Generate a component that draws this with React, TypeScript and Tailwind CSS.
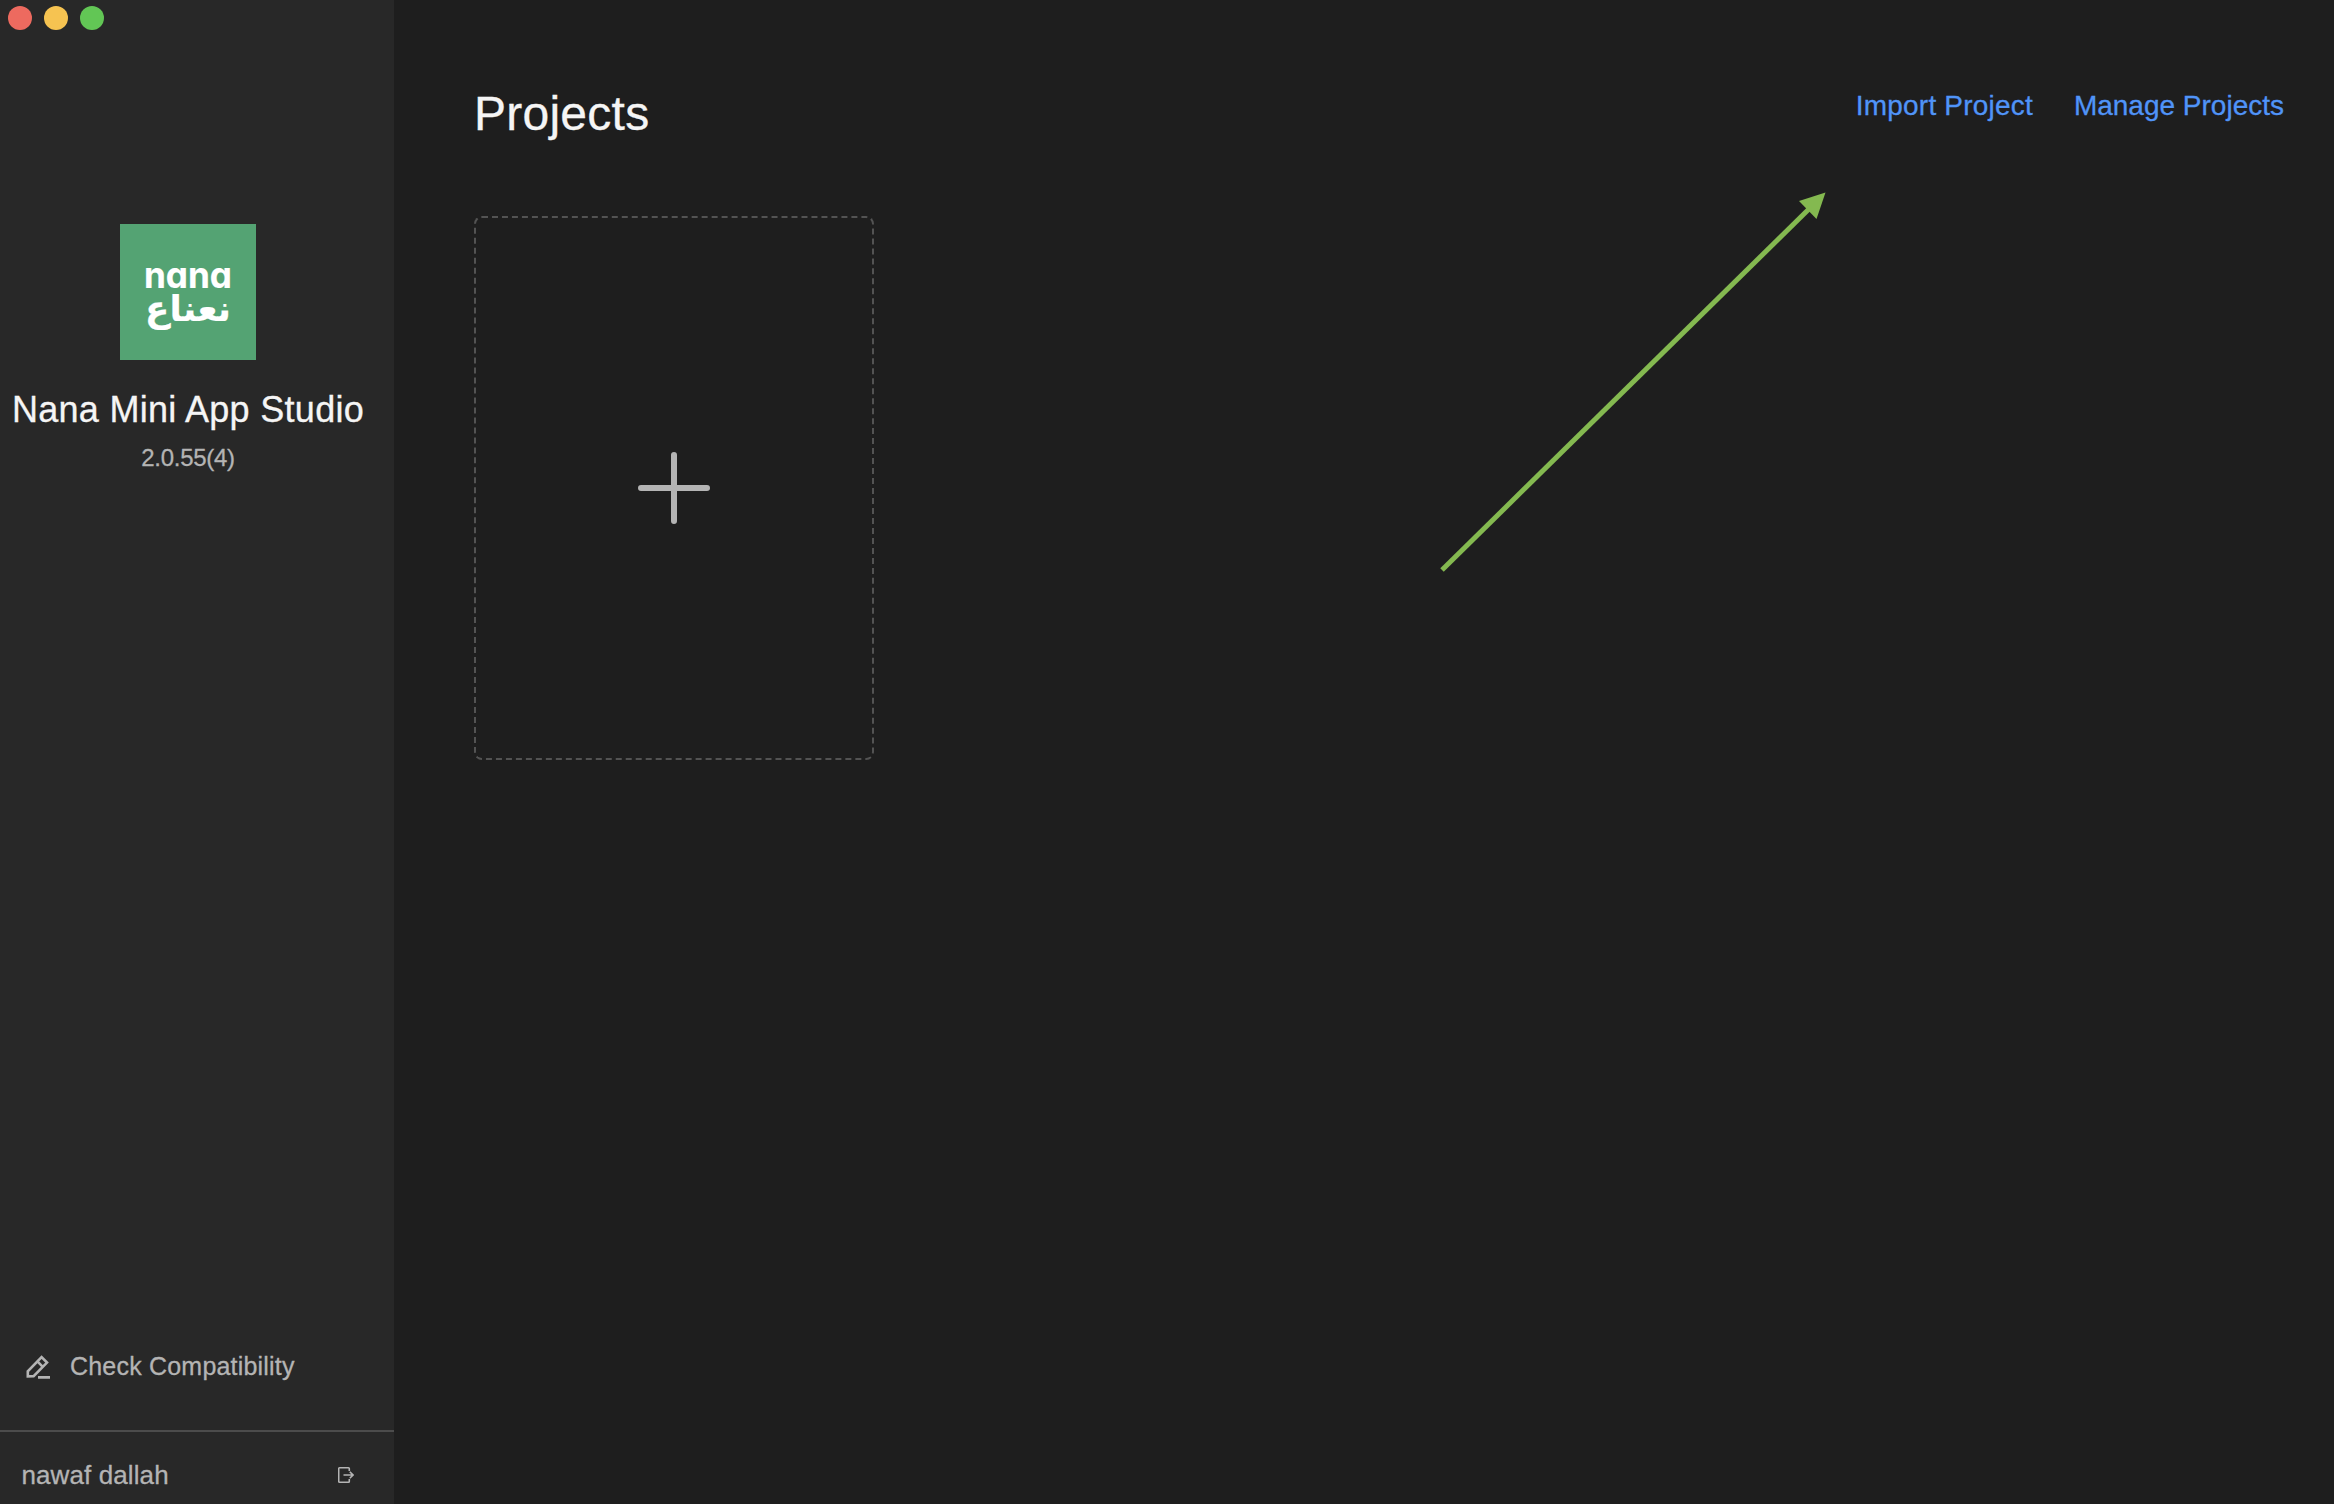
import clsx from 'clsx';
import type { ReactNode } from 'react';

const WINDOW_CONTROLS = [
  { name: 'Close', color: 'bg-[#ed6a5f]' },
  { name: 'Minimize', color: 'bg-[#f6c351]' },
  { name: 'Zoom', color: 'bg-[#62c655]' },
];

function WindowControls() {
  return (
    <div className="flex gap-3 px-2 pt-1.5">
      {WINDOW_CONTROLS.map(({ name, color }) => (
        <button key={name} aria-label={name} className={clsx('size-6 rounded-full', color)} />
      ))}
    </div>
  );
}

function NanaLogo() {
  return (
    <svg className="size-[136px] bg-[#54a373]" viewBox="0 0 136 136" fill="#fff" stroke="#fff">
      <text
        x="24"
        y="63.5"
        fontSize="36"
        strokeWidth="0.2"
        textLength="88"
        lengthAdjust="spacingAndGlyphs"
        className="font-['Inter',sans-serif] font-bold [font-feature-settings:'cv11']"
      >
        nana
      </text>
      <text
        x="68"
        y="96.5"
        fontSize="36"
        strokeWidth="0.2"
        textAnchor="middle"
        direction="rtl"
        textLength="86"
        lengthAdjust="spacingAndGlyphs"
        className="font-['DejaVu_Sans',sans-serif] font-bold"
      >
        نعناع
      </text>
    </svg>
  );
}

function EditIcon() {
  return (
    <svg className="h-6 w-6 shrink-0" viewBox="0 0 24 24" fill="none" stroke="currentColor" strokeWidth="2.6">
      <path d="M1.8 21.4v-5L15.6 2.2l5.4 5.4L7.6 21.2z" />
      <path d="M11.4 6.4l5.4 5.4M12 22.4h12" />
    </svg>
  );
}

function LogoutIcon() {
  return (
    <svg className="h-4 w-4" viewBox="0 0 16 16" fill="none" stroke="currentColor" strokeWidth="1.6">
      <path d="M11.3 4V1.6a.8.8 0 0 0-.8-.8h-9a.8.8 0 0 0-.8.8v12.8a.8.8 0 0 0 .8.8h9a.8.8 0 0 0 .8-.8V12" />
      <path d="M5.5 8h9.3M11.8 4.8L15 8l-3.2 3.2" />
    </svg>
  );
}

function Sidebar() {
  return (
    <aside className="flex w-[394px] shrink-0 flex-col bg-[#282828] text-[#b4b4b4]">
      <WindowControls />
      <div className="mt-[194px] flex w-[376px] flex-col items-center">
        <NanaLogo />
        <h1 className="mt-7 text-[36px] leading-[44px] tracking-[0.3px] whitespace-nowrap text-[#f5f5f5]">
          Nana Mini App Studio
        </h1>
        <p className="mt-2.5 text-2xl leading-8 tracking-[-0.3px]">2.0.55(4)</p>
      </div>
      <button className="mt-auto mb-[47px] flex h-8 items-center gap-5 pl-[26px] text-[25px] tracking-[0.2px]">
        <EditIcon />
        <span>Check Compatibility</span>
      </button>
      <footer className="flex h-[74px] items-center justify-between border-t-2 border-[#4c4c4c] pt-3.5 pr-10 pl-[21.5px] text-[26px] tracking-[0.1px]">
        <span>nawaf dallah</span>
        <button aria-label="Log out">
          <LogoutIcon />
        </button>
      </footer>
    </aside>
  );
}

function HeaderLink({ children, className }: { children: ReactNode; className?: string }) {
  return (
    <a href="#" className={clsx('text-[28px] leading-8 whitespace-nowrap text-[#5094f8]', className)}>
      {children}
    </a>
  );
}

function NewProjectCard() {
  return (
    <button
      aria-label="New project"
      className="mt-[74px] flex h-[544px] w-[400px] items-center justify-center rounded-lg border-2 border-dashed border-[#535353]"
    >
      <svg className="size-[72px]" viewBox="0 0 72 72" stroke="#b4b4b4" strokeWidth="6" strokeLinecap="round">
        <path d="M36 3v66M3 36h66" />
      </svg>
    </button>
  );
}

function GuideArrow() {
  return (
    <svg className="pointer-events-none absolute top-[180px] left-[1430px] h-[400px] w-[410px]" viewBox="0 0 410 400">
      <path d="M12 390L381 27" stroke="#84b950" strokeWidth="5" />
      <path d="M395.5 12.5L386.5 39 369 21z" fill="#84b950" />
    </svg>
  );
}

export default function App() {
  return (
    <div className="relative flex h-screen overflow-hidden bg-[#1e1e1e] font-['Liberation_Sans',Arial,sans-serif] [-webkit-text-stroke:0.3px]">
      <Sidebar />
      <main className="flex-1 pt-[86px] pr-[50px] pl-20">
        <header className="flex items-start justify-between">
          <h2 className="text-[48px] leading-[56px] tracking-[0.25px] text-[#f5f5f5]">Projects</h2>
          <nav className="flex gap-[41px] pt-1">
            <HeaderLink className="tracking-[0.2px]">Import Project</HeaderLink>
            <HeaderLink>Manage Projects</HeaderLink>
          </nav>
        </header>
        <NewProjectCard />
      </main>
      <GuideArrow />
    </div>
  );
}
